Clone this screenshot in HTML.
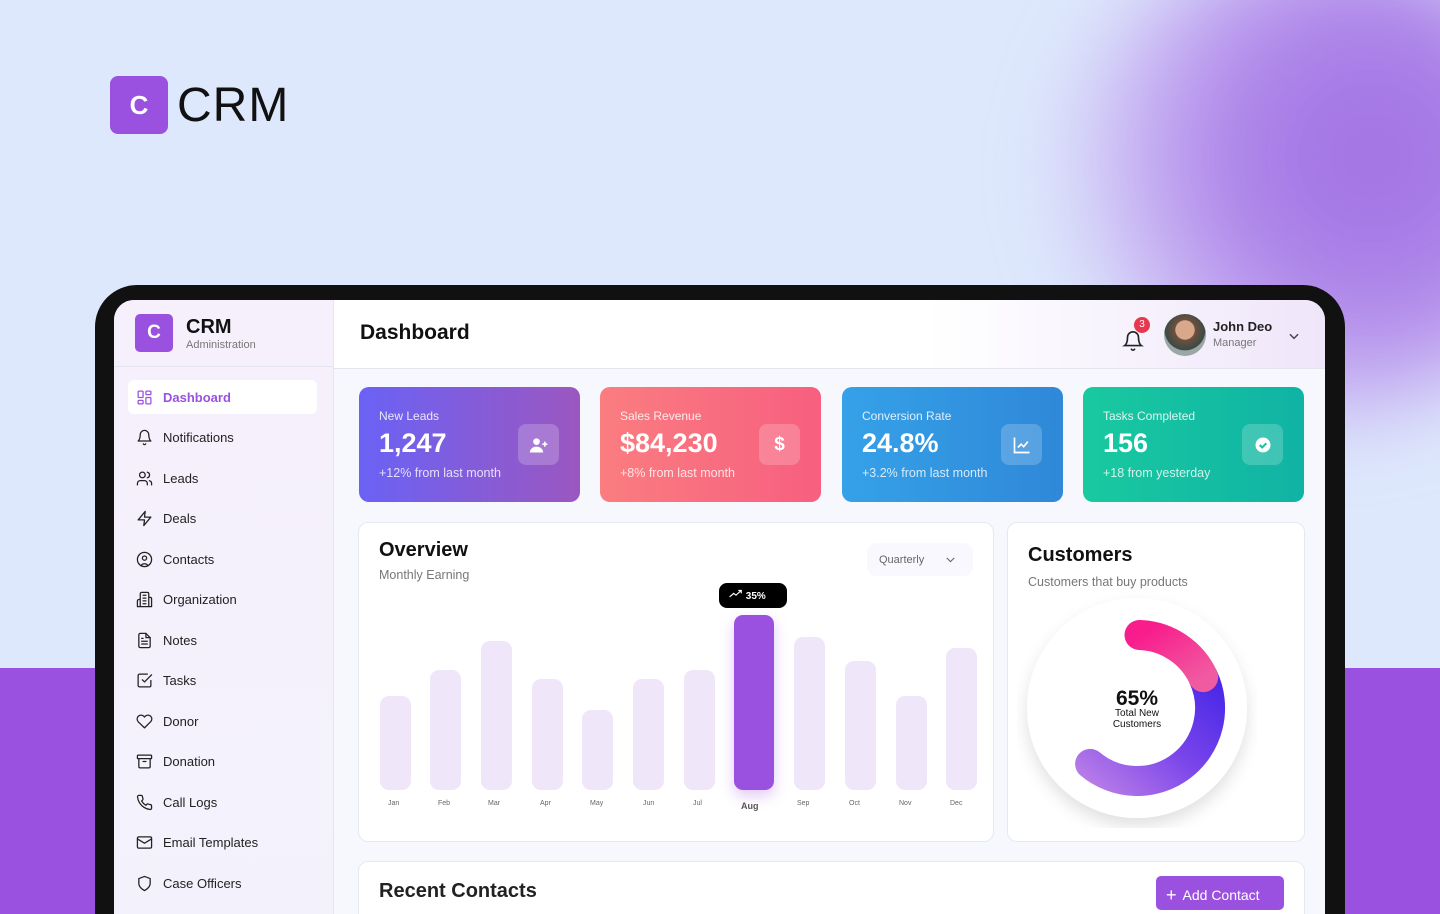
<!DOCTYPE html>
<html style="width:1440px;height:914px;overflow:hidden"><head><meta charset="utf-8"><style>
*{box-sizing:border-box;margin:0;padding:0}
body{width:1440px;height:914px;overflow:hidden;position:relative;font-family:"Liberation Sans",sans-serif;background:#dde8fc}
.bg-bottom{position:absolute;left:0;top:668px;width:1440px;height:246px;background:#9b51e0}
.blob{position:absolute;left:1060px;top:-60px;width:520px;height:480px;border-radius:50%;background:radial-gradient(circle at 60% 45%,#a070e4 0%,#ad84e8 35%,rgba(190,150,238,.6) 60%,rgba(221,232,252,0) 80%);filter:blur(40px)}
.logo{position:absolute;left:110px;top:76px;display:flex;align-items:center}
.logo .c{width:58px;height:58px;border-radius:8px;background:#9b51e0;color:#fff;font-weight:bold;font-size:26px;display:flex;align-items:center;justify-content:center}
.logo span{font-size:48px;color:#111;margin-left:9px;letter-spacing:1px}
.laptop{position:absolute;left:95px;top:285px;width:1250px;height:629px;background:#111;border-radius:42px 42px 0 0}
.screen{position:absolute;left:114px;top:300px;width:1211px;height:614px;background:#f7f8fd;border-radius:20px 20px 0 0;overflow:hidden}
.side{position:absolute;left:0;top:0;width:220px;height:614px;background:linear-gradient(#f6f0fc,#f3f2fc);border-right:1px solid #e6e6f0}
.side .brand{height:67px;border-bottom:1px solid #e4e4ee;display:flex;align-items:center;padding-left:21px}
.brand .c{width:38px;height:38px;border-radius:5px;background:#9b51e0;color:#fff;font-weight:bold;font-size:19px;display:flex;align-items:center;justify-content:center}
.brand b{display:block;font-size:20px;color:#111;margin-left:13px}
.brand small{display:block;font-size:11px;color:#777;margin-left:13px}
.nav{padding-top:13px}
.item{height:34px;margin:0 16px 6.5px 14px;display:flex;align-items:center;padding-left:8px;font-size:13px;color:#222;border-radius:6px}
.item svg{width:17px;height:17px;margin-right:10px;fill:none;stroke:#222;stroke-width:1.8;stroke-linecap:round;stroke-linejoin:round}
.item.act{background:#fff;color:#9b51e0;font-weight:bold}
.item.act svg{stroke:#9b51e0}
.main{position:absolute;left:220px;top:0;width:991px;height:614px}
.top{height:69px;background:linear-gradient(90deg,#fff 60%,#efe6fa);border-bottom:1px solid #e4e4ee;position:relative}
.top h1{position:absolute;left:26px;top:21px;font-size:21px;color:#111}
.card{position:absolute;top:87px;width:221px;height:115px;border-radius:10px;color:#fff}
.card .l{position:absolute;left:20px;top:22px;font-size:12px;opacity:.85}
.card .v{position:absolute;left:20px;top:41px;font-size:27px;font-weight:bold}
.card .s{position:absolute;left:20px;top:79px;font-size:12.5px;opacity:.8}
.card .ic{position:absolute;right:21px;top:37px;width:41px;height:41px;border-radius:8px;background:rgba(255,255,255,.2);display:flex;align-items:center;justify-content:center;font-size:19px;font-weight:bold}
.panel{position:absolute;background:#fff;border:1px solid #e6e8f0;border-radius:10px}
.bar{position:absolute;width:31px;background:#f0e6fa;border-radius:9px;bottom:124px}
.mon{position:absolute;top:800px;font-size:7px;color:#666}
</style></head><body>
<div class="bg-bottom"></div>
<div class="blob"></div>
<div class="logo"><div class="c">C</div><span>CRM</span></div>
<div class="laptop"></div>
<div class="screen">
 <div class="side">
  <div class="brand"><div class="c">C</div><div><b>CRM</b><small>Administration</small></div></div>
  <div class="nav">
   <div class="item act"><svg viewBox="0 0 24 24"><rect x="3" y="3" width="7" height="9" rx="1"/><rect x="14" y="3" width="7" height="5" rx="1"/><rect x="14" y="12" width="7" height="9" rx="1"/><rect x="3" y="16" width="7" height="5" rx="1"/></svg>Dashboard</div>
   <div class="item"><svg viewBox="0 0 24 24"><path d="M6 8a6 6 0 0112 0c0 7 3 9 3 9H3s3-2 3-9M10.3 21a1.9 1.9 0 003.4 0"/></svg>Notifications</div>
   <div class="item"><svg viewBox="0 0 24 24"><circle cx="9" cy="7" r="4"/><path d="M2 21v-2a4 4 0 014-4h6a4 4 0 014 4v2M16 3.1a4 4 0 010 7.8M22 21v-2a4 4 0 00-3-3.9"/></svg>Leads</div>
   <div class="item"><svg viewBox="0 0 24 24"><path d="M13 2L3 14h9l-1 8 10-12h-9l1-8z"/></svg>Deals</div>
   <div class="item"><svg viewBox="0 0 24 24"><circle cx="12" cy="12" r="10"/><circle cx="12" cy="10" r="3"/><path d="M7 20.7a6 6 0 0110 0"/></svg>Contacts</div>
   <div class="item"><svg viewBox="0 0 24 24"><path d="M6 22V4a2 2 0 012-2h8a2 2 0 012 2v18zM6 12H4a2 2 0 00-2 2v8h4M18 9h2a2 2 0 012 2v11h-4M10 6h4M10 10h4M10 14h4M10 18h4"/></svg>Organization</div>
   <div class="item"><svg viewBox="0 0 24 24"><path d="M14 2H6a2 2 0 00-2 2v16a2 2 0 002 2h12a2 2 0 002-2V8z"/><path d="M14 2v6h6M16 13H8M16 17H8M10 9H8"/></svg>Notes</div>
   <div class="item"><svg viewBox="0 0 24 24"><path d="M9 11l3 3L22 4"/><path d="M21 12v7a2 2 0 01-2 2H5a2 2 0 01-2-2V5a2 2 0 012-2h11"/></svg>Tasks</div>
   <div class="item"><svg viewBox="0 0 24 24"><path d="M20.8 4.6a5.5 5.5 0 00-7.8 0L12 5.7l-1-1.1a5.5 5.5 0 00-7.8 7.8l1 1.1L12 21l7.8-7.8 1-1a5.5 5.5 0 000-7.6z"/></svg>Donor</div>
   <div class="item"><svg viewBox="0 0 24 24"><rect x="2" y="3" width="20" height="5" rx="1"/><path d="M4 8v11a2 2 0 002 2h12a2 2 0 002-2V8M10 12h4"/></svg>Donation</div>
   <div class="item"><svg viewBox="0 0 24 24"><path d="M22 16.9v3a2 2 0 01-2.2 2 19.8 19.8 0 01-8.6-3.1 19.5 19.5 0 01-6-6A19.8 19.8 0 012.1 4.2 2 2 0 014.1 2h3a2 2 0 012 1.7c.1 1 .4 1.9.7 2.8a2 2 0 01-.5 2.1L8 9.9a16 16 0 006 6l1.3-1.3a2 2 0 012.1-.4c.9.3 1.8.6 2.8.7a2 2 0 011.7 2z"/></svg>Call Logs</div>
   <div class="item"><svg viewBox="0 0 24 24"><rect x="2" y="4" width="20" height="16" rx="2"/><path d="M22 7l-10 6L2 7"/></svg>Email Templates</div>
   <div class="item"><svg viewBox="0 0 24 24"><path d="M12 22s8-4 8-10V5l-8-3-8 3v7c0 6 8 10 8 10z"/></svg>Case Officers</div>
  </div>
 </div>
 <div class="main">
  <div class="top"><h1>Dashboard</h1>
   <svg style="position:absolute;left:788px;top:30px" width="22" height="22" viewBox="0 0 24 24" fill="none" stroke="#222" stroke-width="1.8" stroke-linecap="round"><path d="M6 8a6 6 0 0112 0c0 7 3 9 3 9H3s3-2 3-9M10.3 21a1.9 1.9 0 003.4 0"/></svg>
   <div style="position:absolute;left:800px;top:17px;width:16px;height:16px;border-radius:50%;background:#e63950;color:#fff;font-size:10px;text-align:center;line-height:16px">3</div>
   <div style="position:absolute;left:830px;top:14px;width:42px;height:42px;border-radius:50%;background:radial-gradient(circle at 50% 38%,#d9a88a 0 28%,#6d5040 30%,#3a4a44 60%,#9aa7a6 62%)"></div>
   <div style="position:absolute;left:879px;top:19px;font-size:13px;font-weight:bold;color:#222">John Deo</div>
   <div style="position:absolute;left:879px;top:37px;font-size:11px;color:#777">Manager</div>
   <svg style="position:absolute;left:953px;top:29px" width="14" height="14" viewBox="0 0 24 24" fill="none" stroke="#444" stroke-width="2.5"><path d="M5 9l7 7 7-7"/></svg>
  </div>
  <div class="card" style="left:25px;background:linear-gradient(90deg,#6a62f5,#9b57c0)"><div class="l">New Leads</div><div class="v">1,247</div><div class="s">+12% from last month</div><div class="ic"><svg width="20" height="20" viewBox="0 0 24 24" fill="#fff"><circle cx="9" cy="8" r="4"/><path d="M1 21a8 7 0 0116 0z"/><path d="M19 8v6M16 11h6" stroke="#fff" stroke-width="2"/></svg></div></div>
  <div class="card" style="left:266px;background:linear-gradient(90deg,#fa7d80,#f75f7f)"><div class="l">Sales Revenue</div><div class="v">$84,230</div><div class="s">+8% from last month</div><div class="ic">$</div></div>
  <div class="card" style="left:508px;background:linear-gradient(90deg,#35a1e8,#2f88d8)"><div class="l">Conversion Rate</div><div class="v">24.8%</div><div class="s">+3.2% from last month</div><div class="ic"><svg width="20" height="20" viewBox="0 0 24 24" fill="none" stroke="#fff" stroke-width="2"><path d="M3 3v18h18M7 15l4-4 3 3 5-6"/></svg></div></div>
  <div class="card" style="left:749px;background:linear-gradient(90deg,#19c9a0,#10b3a4)"><div class="l">Tasks Completed</div><div class="v">156</div><div class="s">+18 from yesterday</div><div class="ic"><svg width="20" height="20" viewBox="0 0 24 24"><circle cx="12" cy="12" r="9" fill="#fff"/><path d="M8 12l3 3 5-5" fill="none" stroke="#19bfa2" stroke-width="2.4"/></svg></div></div>
  <div class="panel" style="left:24px;top:222px;width:636px;height:320px">
   <div style="position:absolute;left:20px;top:16px;font-size:20px;font-weight:bold;color:#111">Overview</div>
   <div style="position:absolute;left:20px;top:45px;font-size:12.5px;color:#777">Monthly Earning</div>
   <div style="position:absolute;left:508px;top:20px;width:106px;height:33px;border-radius:10px;background:#f8f8fe;font-size:11px;color:#666;padding:11px 0 0 12px">Quarterly<svg style="position:absolute;left:77px;top:10px" width="13" height="13" viewBox="0 0 24 24" fill="none" stroke="#666" stroke-width="2"><path d="M5 9l7 7 7-7"/></svg></div>
  </div>
  <div class="panel" style="left:673px;top:222px;width:298px;height:320px">
   <div style="position:absolute;left:20px;top:21px;font-size:20px;font-weight:bold;color:#111">Customers</div>
   <div style="position:absolute;left:20px;top:52px;font-size:12.5px;color:#777">Customers that buy products</div>
  </div>
  <div class="panel" style="left:24px;top:561px;width:947px;height:80px">
   <div style="position:absolute;left:20px;top:18px;font-size:20px;font-weight:bold;color:#222">Recent Contacts</div>
   <div style="position:absolute;left:797px;top:14px;width:128px;height:34px;border-radius:5px;background:#9b51e0;color:#fff;font-size:14px;padding:8px 0 0 10px"><b style="font-size:18px;font-weight:normal;margin-right:6px;position:relative;top:1px">+</b>Add Contact</div>
  </div>
 </div>
</div>
<div style="position:absolute;left:0;top:0;width:1440px;height:914px">
 <div class="bar" style="left:380px;top:696px"></div>
 <div class="bar" style="left:430px;top:670px"></div>
 <div class="bar" style="left:481px;top:641px"></div>
 <div class="bar" style="left:532px;top:679px"></div>
 <div class="bar" style="left:582px;top:710px"></div>
 <div class="bar" style="left:633px;top:679px"></div>
 <div class="bar" style="left:684px;top:670px"></div>
 <div class="bar" style="left:734px;top:615px;width:40px;background:#9b51e0;box-shadow:0 6px 14px rgba(155,81,224,.3)"></div>
 <div class="bar" style="left:794px;top:637px"></div>
 <div class="bar" style="left:845px;top:661px"></div>
 <div class="bar" style="left:896px;top:696px"></div>
 <div class="bar" style="left:946px;top:648px"></div>
 <div style="position:absolute;left:719px;top:583px;width:68px;height:25px;border-radius:8px;background:#000;color:#fff;font-size:10px;font-weight:bold;padding:6px 0 0 10px"><svg width="14" height="10" viewBox="0 0 24 16" fill="none" stroke="#fff" stroke-width="2"><path d="M1 13l7-6 4 3 9-8M16 2h5v5"/></svg> 35%</div>
 <div class="mon" style="left:388px">Jan</div><div class="mon" style="left:438px">Feb</div><div class="mon" style="left:488px">Mar</div><div class="mon" style="left:540px">Apr</div><div class="mon" style="left:590px">May</div><div class="mon" style="left:643px">Jun</div><div class="mon" style="left:693px">Jul</div><div class="mon" style="left:741px;top:801px;font-size:9px;font-weight:bold;color:#555">Aug</div><div class="mon" style="left:797px">Sep</div><div class="mon" style="left:849px">Oct</div><div class="mon" style="left:899px">Nov</div><div class="mon" style="left:950px">Dec</div>
 <svg style="position:absolute;left:1017px;top:588px" width="240" height="240" viewBox="0 0 240 240">
  <defs>
   <linearGradient id="gp" x1="0" y1="0" x2="1" y2="1"><stop offset="0" stop-color="#f81c8c"/><stop offset="1" stop-color="#f05aa0"/></linearGradient>
   <linearGradient id="gb" x1="0" y1="1" x2="1" y2="0"><stop offset="0" stop-color="#b67ae8"/><stop offset=".5" stop-color="#7a45ea"/><stop offset="1" stop-color="#4a28e8"/></linearGradient>
   <filter id="sh" x="-20%" y="-20%" width="140%" height="140%"><feDropShadow dx="0" dy="8" stdDeviation="8" flood-color="#000" flood-opacity=".12"/></filter>
  </defs>
  <circle cx="120" cy="120" r="110" fill="#fff" filter="url(#sh)"/>
  <path d="M73.1 175.9 A73 73 0 0 0 186.2 89.1" fill="none" stroke="url(#gb)" stroke-width="30" stroke-linecap="round"/>
  <path d="M122.5 47 A73 73 0 0 1 186.2 89.1" fill="none" stroke="url(#gp)" stroke-width="30" stroke-linecap="round"/>
  <text x="120" y="117" text-anchor="middle" font-family="Liberation Sans" font-weight="bold" font-size="21" fill="#111">65%</text>
  <text x="120" y="128" text-anchor="middle" font-family="Liberation Sans" font-size="10" fill="#111">Total New</text>
  <text x="120" y="139" text-anchor="middle" font-family="Liberation Sans" font-size="10" fill="#111">Customers</text>
 </svg>
</div>
</body></html>
